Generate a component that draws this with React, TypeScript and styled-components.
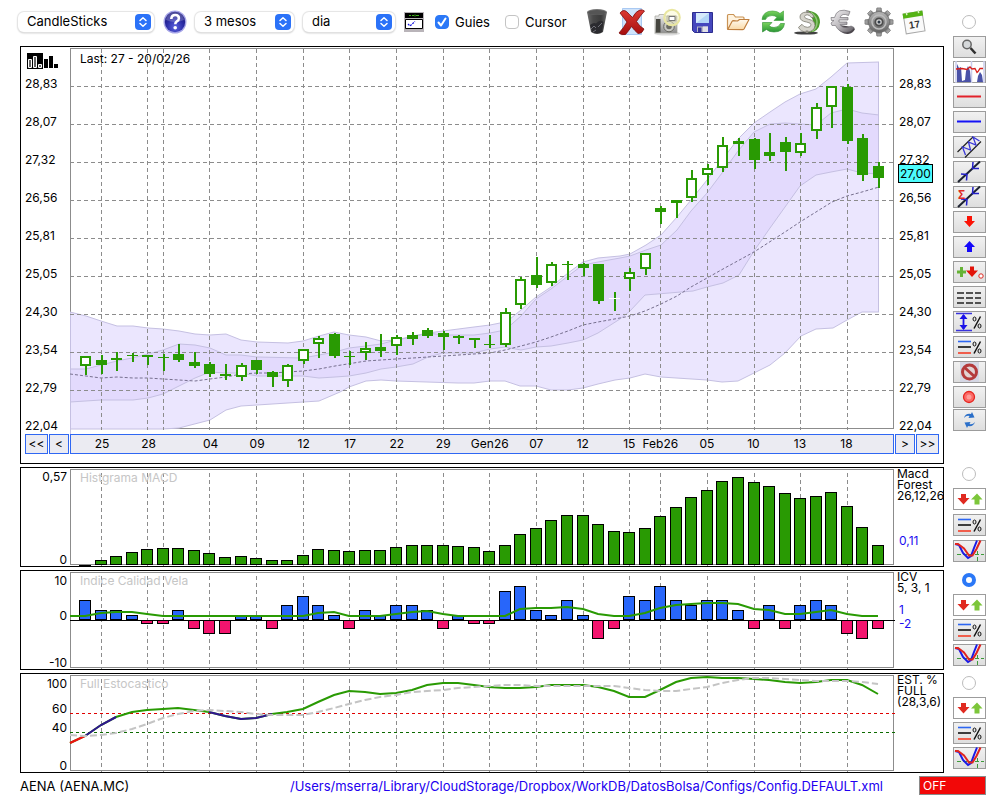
import React from "react";
import styled, { createGlobalStyle } from "styled-components";

const GlobalStyle = createGlobalStyle`
  * { box-sizing: border-box; }
  body {
    margin: 0;
    background: #fff;
    color: #000;
    font-family: Inter, "Liberation Sans", sans-serif;
    font-size: 12px;
  }
  button, select, input { font: inherit; color: inherit; }
`;

const GREEN = "#299a03";
const GRID = "#8c8c8c";

/* ---------- page ---------- */

const Page = styled.div`
  min-width: 960px;
`;

const Row = styled.div`
  display: grid;
  grid-template-columns: minmax(0, 1fr) 56px;
  margin-bottom: 3px;
`;

const HeaderRow = styled(Row)`
  height: 36px;
  padding-top: 7px;
  align-items: center;
  margin-bottom: 0;
`;

const Toolbar = styled.header`
  display: flex;
  align-items: center;
  gap: 9px;
  padding: 0 16px 0 18px;
`;

const SelectBox = styled.span<{ $w: number }>`
  position: relative;
  display: block;
  flex: none;
  width: ${(p) => p.$w}px;
  height: 20px;
`;

const Select = styled.select`
  appearance: none;
  width: 100%;
  height: 20px;
  padding: 0 22px 2px 9px;
  border: 0;
  border-radius: 6px;
  background: #fff;
  box-shadow: 0 0 1px 1px #e4e4e4, 0 1px 2px #b4b4b4;
  font-size: 13px;
  line-height: 18px;
`;

const Chip = styled.svg`
  position: absolute;
  top: 2px;
  right: 3px;
  width: 16px;
  height: 16px;
  pointer-events: none;
`;

const IconButton = styled.button<{ $w: number }>`
  display: flex;
  align-items: center;
  justify-content: center;
  flex: none;
  width: ${(p) => p.$w}px;
  height: 28px;
  padding: 0;
  border: 0;
  background: none;
  svg { display: block; flex: none; }
`;

const Check = styled.label`
  display: flex;
  align-items: center;
  flex: none;
  gap: 6px;
  margin-left: 2px;
  padding-top: 1px;
  font-size: 13px;
  line-height: 16px;
  & + & { margin-left: 6px; }
`;

const CheckInput = styled.input`
  appearance: none;
  width: 14px;
  height: 14px;
  margin: 0;
  border: 1px solid #c4c4c4;
  border-radius: 4px;
  background: #fff;
  &:checked {
    border-color: #2b78f7;
    background: #2b78f7;
  }
`;

const CheckBoxWrap = styled.span`
  position: relative;
  display: flex;
  svg {
    position: absolute;
    inset: 0;
    pointer-events: none;
  }
`;

const IconGroup = styled.div`
  display: flex;
  flex: 1;
  justify-content: space-between;
  margin-left: 7px;
`;

/* ---------- side tools ---------- */

const Side = styled.div<{ $top?: number }>`
  display: flex;
  flex-direction: column;
  align-items: flex-start;
  padding: ${(p) => p.$top ?? 0}px 0 0 9px;
`;

const Radio = styled.input`
  appearance: none;
  display: block;
  width: 14px;
  height: 14px;
  margin: 0 0 0 9px;
  border: 1px solid #bcbcbc;
  border-radius: 50%;
  background: #fff;
  &:checked { border: 4px solid #2b78f7; }
`;

const Tools = styled.div<{ $gap: number; $top: number }>`
  display: flex;
  flex-direction: column;
  gap: ${(p) => p.$gap}px;
  margin-top: ${(p) => p.$top}px;
`;

const Tool = styled.button<{ $plain?: boolean }>`
  display: block;
  width: 33px;
  height: 22px;
  padding: 0;
  border: 1px solid #9c9c9c;
  background: ${(p) => (p.$plain ? "#fff" : "linear-gradient(#f1f1f1, #dedede)")};
  svg { display: block; margin: -1px; }
  text { font-family: "Liberation Sans", sans-serif; }
`;

/* ---------- panels ---------- */

const Panel = styled.section<{ $top?: number }>`
  display: grid;
  grid-template-columns: 49px minmax(0, 1fr) 49px;
  align-content: start;
  margin: ${(p) => p.$top ?? 0}px 0 0 20px;
  border: 1px solid #000;
  overflow: hidden;
`;

const Plot = styled.div`
  position: relative;
`;

const Chart = styled.svg<{ $h: number }>`
  display: block;
  width: 100%;
  height: ${(p) => p.$h}px;
  overflow: visible;
  path, polyline, polygon, line { vector-effect: non-scaling-stroke; }
`;

const Caption = styled.span<{ $muted?: boolean }>`
  position: absolute;
  top: ${(p) => (p.$muted ? 2 : 4)}px;
  left: 10px;
  line-height: 16px;
  color: ${(p) => (p.$muted ? "#c6c6c6" : "#000")};
`;

const PriceScale = styled.div<{ $logo?: boolean }>`
  position: relative;
  display: flex;
  flex-direction: column;
  gap: 22px;
  padding: ${(p) => (p.$logo ? "0 0 0 4px" : "29px 0 0 5px")};
  line-height: 16px;
  svg { display: block; margin: 6px 0 -15px 2px; }
`;

const PriceTag = styled.span`
  position: absolute;
  top: 117px;
  left: 4px;
  padding: 0 1px;
  border: 1px solid #000;
  background: #4dfcfc;
  line-height: 17px;
`;

const NavCell = styled.div<{ $end?: boolean }>`
  display: flex;
  gap: 1px;
  justify-content: flex-end;
  padding: ${(p) => (p.$end ? "0 4px 0 1px" : "0 1px 0 4px")};
`;

const NavButton = styled.button<{ $w: number }>`
  width: ${(p) => p.$w}px;
  height: 20px;
  padding: 0;
  border: 1px solid #2f67f3;
  background: #ebebf2;
  line-height: 18px;
`;

const TimeAxis = styled.div`
  display: grid;
  grid-template-columns: repeat(53, minmax(0, 1fr));
  height: 20px;
  margin-bottom: 9px;
  border: 1px solid #2f67f3;
  background: #ebebf2;
  line-height: 18px;
`;

const TimeLabel = styled.span<{ $i: number }>`
  grid-column: ${(p) => p.$i + 1} / span 2;
  grid-row: 1;
  justify-self: center;
  white-space: nowrap;
`;

const TickColumn = styled.div<{ $top: number }>`
  display: flex;
  flex-direction: column;
  align-items: flex-end;
  padding: ${(p) => p.$top}px 3px 0 0;
  line-height: 12px;
`;

const Tick = styled.span<{ $gap: number }>`
  margin-top: ${(p) => p.$gap}px;
`;

const Legend = styled.div`
  padding-left: 3px;
  line-height: 11px;
  white-space: nowrap;
`;

const LegendLine = styled.div``;

const Values = styled.div<{ $top: number }>`
  margin-top: ${(p) => p.$top}px;
  padding-left: 2px;
  color: #1c0ff0;
  line-height: 14px;
`;

/* ---------- footer ---------- */

const Footer = styled.footer`
  display: flex;
  align-items: center;
  padding: 0 14px 0 20px;
  font-size: 13px;
  line-height: 18px;
`;

const ConfigLink = styled.a`
  margin: 0 36px 0 auto;
  color: #2200f0;
  text-decoration: none;
`;

const OffButton = styled.button`
  width: 67px;
  height: 19px;
  padding: 0 3px;
  border: 1px solid #8a8a8a;
  background: #f20808;
  color: #fff;
  font-size: 12px;
  text-align: left;
  line-height: 17px;
`;

/* ---------- data ---------- */

const LEFT = 70;
const STEP = 824 / 53;
const xAt = (i: number) => LEFT + Math.floor(STEP * (i + 1));

const guides = [1, 4, 5, 8, 11, 14, 17, 20, 23, 26, 29, 32, 35, 37, 40, 43, 46, 49];
const dates: [number, string][] = [
  [1, "25"], [4, "28"], [8, "04"], [11, "09"], [14, "12"], [17, "17"], [20, "22"], [23, "29"],
  [26, "Gen26"], [29, "07"], [32, "12"], [35, "15"], [37, "Feb26"], [40, "05"], [43, "10"], [46, "13"], [49, "18"],
];
const prices = ["28,83", "28,07", "27,32", "26,56", "25,81", "25,05", "24,30", "23,54", "22,79", "22,04"];

/* high, body top, body bottom, low, kind: 0 filled, 1 hollow, 2 white dash */
const candles: [number, number, number, number, number][] = [
  [356, 356, 366, 375, 1], [355, 360, 365, 374, 0], [352, 358, 360, 371, 0], [353, 355, 356, 362, 0],
  [355, 355, 357, 365, 0], [354, 357, 358, 371, 0], [344, 354, 360, 362, 0], [352, 362, 366, 368, 0],
  [362, 364, 374, 377, 0], [364, 374, 376, 380, 0], [363, 365, 377, 381, 1], [360, 360, 370, 374, 0],
  [371, 372, 377, 387, 0], [364, 365, 381, 387, 1], [349, 349, 361, 364, 1], [336, 338, 344, 358, 1],
  [333, 334, 356, 358, 0], [351, 356, 357, 365, 0], [342, 348, 353, 360, 1], [334, 347, 351, 357, 0],
  [335, 337, 346, 355, 1], [332, 335, 339, 345, 0], [328, 330, 336, 338, 0], [331, 333, 337, 350, 0],
  [335, 336, 338, 344, 0], [338, 338, 340, 348, 0], [335, 344, 345, 348, 0], [308, 312, 345, 347, 1],
  [277, 279, 305, 309, 1], [257, 275, 285, 288, 0], [262, 264, 283, 286, 1], [261, 264, 265, 280, 0],
  [263, 264, 268, 276, 0], [264, 264, 301, 304, 0], [292, 298, 299, 311, 2], [268, 272, 279, 291, 1],
  [253, 253, 269, 275, 1], [206, 208, 212, 224, 0], [200, 200, 203, 218, 0], [170, 178, 198, 202, 1],
  [164, 168, 175, 185, 1], [137, 145, 168, 172, 1], [138, 141, 144, 156, 0], [138, 139, 160, 169, 0],
  [133, 152, 156, 161, 0], [137, 142, 152, 171, 0], [133, 143, 153, 156, 1], [103, 107, 131, 139, 1],
  [86, 86, 107, 128, 1], [84, 87, 141, 144, 0], [134, 138, 175, 181, 0], [162, 166, 178, 188, 0],
];

const outerUp = "70,312 86,316 101,321 117,326 133,326 148,328 163,329 179,331 195,334 210,335 226,334 241,340 257,342 288,343 303,341 319,336 334,332 349,335 366,337 381,341 396,340 413,336 428,333 443,331 474,327 490,325 500,323 510,319 521,310 536,297 551,287 568,273 583,262 598,258 620,256 630,254 646,245 661,235 677,217 691,200 707,180 722,160 738,139 754,123 770,112 785,102 800,94 816,89 831,77 847,63 879,62";
const outerLow = "879,312 862,312 847,320 833,328 816,329 801,336 785,353 770,365 754,373 738,381 722,382 707,380 661,377 645,374 630,378 615,380 598,384 583,388 568,390 551,390 536,386 520,386 505,381 490,381 474,383 458,383 427,382 396,381 381,380 366,381 349,387 340,392 319,401 303,402 257,405 241,406 226,410 210,420 179,428 163,429 70,429";
const innerUp = "70,369 86,369 101,365 117,361 132,358 148,354 163,350 179,344 195,345 210,348 226,355 241,355 257,357 303,358 319,355 335,352 349,348 366,346 381,344 396,340 413,337 428,333 443,335 474,335 490,333 505,330 513,323 521,316 536,299 551,289 568,276 583,265 598,262 620,258 630,256 646,250 661,245 677,230 691,211 707,193 722,173 738,151 754,132 770,124 785,123 800,124 816,125 831,113 847,109 862,113 879,115";
const innerLow = "879,174 862,173 847,169 831,172 816,175 800,186 785,207 770,228 754,251 739,275 723,283 707,287 693,291 645,295 630,311 620,319 598,333 583,340 568,343 551,346 536,347 521,350 505,347 490,349 474,353 443,353 428,357 413,364 396,367 381,369 366,373 349,376 335,377 319,378 303,376 257,376 241,373 226,373 210,372 195,378 179,386 163,394 148,398 133,400 101,400 70,402";
const middle = "70,374 86,376 101,378 117,377 133,378 148,378 163,379 195,381 210,379 226,377 241,374 257,373 272,373 303,371 319,369 335,366 366,361 396,359 413,358 428,357 474,354 490,353 505,350 521,346 536,342 551,337 568,331 583,325 598,322 620,318 630,316 645,311 661,304 677,296 691,287 707,278 723,269 754,252 785,232 800,222 816,212 832,202 847,196 862,192 879,187";

const macdTops = [
  565, 560, 556, 552, 549, 548, 548, 550, 553, 557, 556, 558, 560, 560, 555, 549, 550, 551, 550, 550, 547, 545, 545, 545, 546, 547,
  551, 545, 534, 528, 520, 515, 515, 524, 531, 532, 528, 516, 507, 497, 490, 481, 477, 482, 486, 493, 498, 496, 492, 506, 527, 545,
];
const icvEnds = [
  600, 610, 610, 615, 624, 624, 610, 629, 634, 634, 615, 615, 629, 605, 596, 605, 615, 629, 610, 615, 605, 605, 610, 629, 615, 624,
  624, 591, 586, 610, 615, 600, 615, 639, 629, 596, 600, 586, 600, 605, 600, 600, 610, 629, 605, 629, 605, 600, 605, 634, 639, 629,
];
const icvLine = [
  616, 616, 613, 612, 612, 614, 616, 616, 616, 616, 616, 616, 616, 616, 616, 616, 613, 612, 616, 616, 616, 614, 612, 611, 614, 616, 616,
  616, 616, 609, 608, 608, 607, 609, 614, 616, 616, 613, 608, 605, 604, 603, 603, 604, 609, 610, 614, 614, 612, 610, 614, 616, 616,
];
const stoch = [
  743, 736, 725, 717, 712, 710, 709, 708, 710, 712, 716, 719, 718, 714, 712, 709, 702, 695, 691, 692, 694, 693, 690, 685, 683, 683, 685,
  687, 688, 688, 687, 685, 685, 685, 687, 691, 697, 697, 690, 682, 678, 677, 678, 678, 679, 680, 682, 683, 682, 680, 680, 685, 694,
];
const stochAvg = [
  735, 736, 735, 733, 729, 724, 718, 714, 711, 710, 711, 712, 714, 715, 715, 715, 712, 708, 704, 700, 697, 695, 692, 691, 690, 688, 687,
  686, 685, 685, 686, 686, 686, 686, 686, 686, 688, 690, 691, 691, 689, 687, 683, 680, 678, 678, 679, 680, 681, 681, 681, 682, 684,
];
/* series that start on the left edge of the plot, one step before the first candle */
const series = (ys: number[], from = 0, to = ys.length - 1) =>
  ys.slice(from, to + 1).map((y, k) => `${xAt(from + k - 1)},${y}`).join(" ");

/* ---------- charts ---------- */

const Guides = ({ top, bottom }: { top: number; bottom: number }) => (
  <g stroke={GRID} strokeDasharray="4 3" shapeRendering="crispEdges">
    {guides.map((i) => (
      <line key={i} x1={xAt(i) + 0.5} x2={xAt(i) + 0.5} y1={top} y2={bottom} />
    ))}
  </g>
);

const Frame = ({ top, bottom }: { top: number; bottom: number }) => (
  <path
    d={`M70.5 ${bottom + 0.5}V${top + 0.5}H893.5V${bottom + 0.5}Z`}
    fill="none"
    stroke={GRID}
    shapeRendering="crispEdges"
  />
);

const PriceChart = () => (
  <Chart $h={387} viewBox="70 47 824 387" preserveAspectRatio="none" role="img" aria-label="AENA candlesticks">
    <Frame top={48} bottom={428} />
    <polygon points={`${outerUp} ${outerLow}`} fill="#ebe6fe" />
    <polygon points={`${innerUp} ${innerLow}`} fill="#e3dafd" />
    <g fill="none" stroke="#c5c0e2">
      <polyline points={outerUp} />
      <polyline points={outerLow} />
      <polyline points={innerUp} />
      <polyline points={innerLow} />
      <path d="M878.5 62V312M70.5 312V434" />
    </g>
    <polyline points={middle} fill="none" stroke="#77708f" strokeDasharray="3 2" />
    <Guides top={49} bottom={430} />
    <g stroke={GRID} strokeDasharray="4 3" shapeRendering="crispEdges">
      {prices.slice(0, 9).map((p, k) => (
        <line key={p} x1={70} x2={896} y1={86.5 + 38 * k} y2={86.5 + 38 * k} />
      ))}
    </g>
    <g shapeRendering="crispEdges">
      {candles.map(([high, top, bottom, low, kind], i) => (
        <g key={i} fill={GREEN}>
          <rect x={xAt(i)} y={high} width={2} height={low - high} />
          <rect x={xAt(i) - 5} y={top} width={11} height={bottom - top} fill={kind === 2 ? "#fff" : GREEN} />
          {kind === 1 && <rect x={xAt(i) - 3} y={top + 2} width={7} height={bottom - top - 4} fill="#fff" />}
        </g>
      ))}
    </g>
  </Chart>
);

const MacdChart = () => (
  <Chart $h={98} viewBox="70 468 824 98" preserveAspectRatio="none" role="img" aria-label="MACD histogram">
    <Frame top={469} bottom={564} />
    <Guides top={473} bottom={566} />
    <g fill={GREEN} stroke="#000" shapeRendering="crispEdges">
      {macdTops.map((y, i) =>
        i === 0 ? (
          <line key={i} x1={xAt(i) - 6} x2={xAt(i) + 6} y1={565.5} y2={565.5} />
        ) : (
          <rect key={i} x={xAt(i) - 5.5} y={y + 0.5} width={11} height={564 - y} />
        ),
      )}
    </g>
  </Chart>
);

const IcvChart = () => (
  <Chart $h={98} viewBox="70 571 824 98" preserveAspectRatio="none" role="img" aria-label="Candle quality index">
    <Frame top={572} bottom={667} />
    <Guides top={576} bottom={669} />
    <g stroke="#000" shapeRendering="crispEdges">
      {icvEnds.map((y, i) =>
        y < 620 ? (
          <rect key={i} x={xAt(i) - 5.5} y={y + 0.5} width={11} height={619 - y} fill="#2866fa" />
        ) : (
          <rect key={i} x={xAt(i) - 5.5} y={620.5} width={11} height={y - 621} fill="#f2146e" />
        ),
      )}
      <line x1={70} x2={895} y1={620.5} y2={620.5} />
    </g>
    <polyline points={series(icvLine)} fill="none" stroke={GREEN} strokeWidth={2} />
  </Chart>
);

const StochChart = () => (
  <Chart $h={98} viewBox="70 674 824 98" preserveAspectRatio="none" role="img" aria-label="Full stochastic">
    <Frame top={675} bottom={770} />
    <Guides top={679} bottom={772} />
    <g strokeDasharray="3 3" shapeRendering="crispEdges">
      <line x1={70} x2={895} y1={713.5} y2={713.5} stroke="#e00000" />
      <line x1={70} x2={895} y1={732.5} y2={732.5} stroke="#0c6b00" />
    </g>
    <g fill="none" strokeWidth={2}>
      <polyline points={series(stoch)} stroke={GREEN} />
      <polyline points={series(stoch, 0, 1)} stroke="#f01010" />
      <polyline points={series(stoch, 1, 3)} stroke="#2f1590" />
      <polyline points={series(stoch, 9, 13)} stroke="#2f1590" />
      <polyline points={series(stochAvg)} stroke="#c4c4c4" strokeDasharray="7 3" />
    </g>
  </Chart>
);

/* ---------- toolbar icons ---------- */

const Updown = () => (
  <Chip viewBox="0 0 16 16">
    <rect width="16" height="16" rx="4" fill="#2b72f8" />
    <path d="M5 6.5 8 3.7l3 2.8M5 9.5l3 2.8 3-2.8" fill="none" stroke="#fff" strokeWidth="1.5" strokeLinecap="round" strokeLinejoin="round" />
  </Chip>
);

const HelpIcon = () => (
  <svg width="24" height="26" viewBox="0 0 24 26">
    <defs>
      <radialGradient id="help" cx=".5" cy=".75" r=".7">
        <stop offset="0" stopColor="#5a62e0" />
        <stop offset=".6" stopColor="#2a2ba4" />
        <stop offset="1" stopColor="#1c1a7c" />
      </radialGradient>
    </defs>
    <circle cx="12" cy="13" r="11.5" fill="#a7a6e8" />
    <circle cx="12" cy="13" r="10.2" fill="url(#help)" />
    <path d="M3 11a9 8 0 0 1 18 0q-9 4-18 0z" fill="#fff" opacity=".22" />
    <path d="M8.3 10q.2-4 3.9-4 3.7 0 3.7 3.2 0 2-2.1 3.2-1.5.9-1.5 2.8" fill="none" stroke="#fff" strokeWidth="2.6" />
    <circle cx="12.2" cy="18.7" r="1.8" fill="#fff" />
  </svg>
);

const PlanIcon = () => (
  <svg width="20" height="20" viewBox="0 0 20 20">
    <path fill="#b9b4b9" d="M0 0h20v20H0z" />
    <path fill="#000" d="M1 1h18v5H1z" />
    <path d="M5 3.5h2m1 0h2m1-1v2m1-1h3" stroke="#3fae1a" />
    <path fill="#fff" stroke="#000" d="M1.5 7.500h17v9h-17z" />
    <path d="m4 12 2 2 5-4.500" fill="none" stroke="#1515e0" strokeWidth="1.3" strokeDasharray="2 1" />
  </svg>
);

const TrashIcon = () => (
  <svg width="28" height="28" viewBox="0 0 28 28">
    <defs>
      <linearGradient id="can">
        <stop offset="0" stopColor="#6e6e6e" />
        <stop offset=".3" stopColor="#4a4a4a" />
        <stop offset=".7" stopColor="#3b3b3b" />
        <stop offset="1" stopColor="#6b6b6b" />
      </linearGradient>
    </defs>
    <path d="M4 4 8 24q6 4 12 0l4-20z" fill="url(#can)" />
    <ellipse cx="14" cy="4" rx="10" ry="3" fill="#777" />
    <ellipse cx="14" cy="4.500" rx="9" ry="2.500" fill="#555" />
    <path d="M7 17q4-3 6-1.500Q17 11 20.500 14L19 24q-5 2.500-10 0z" fill="#2b2b2f" />
    <path d="m8 21 3-3 2 2M15 19l4-4M10 24l3-2" stroke="#6e6e75" fill="none" />
  </svg>
);

const DeleteIcon = () => (
  <svg width="28" height="28" viewBox="0 0 28 28">
    <defs>
      <linearGradient id="cross" x2="0" y2="1">
        <stop offset="0" stopColor="#dd3a34" />
        <stop offset="1" stopColor="#a50d0d" />
      </linearGradient>
    </defs>
    <path d="M4.500.500h19v26h-19z" fill="#cfe3fb" stroke="#a9c9f2" />
    <path d="M2 5q3-4 6.500-1.500Q12 7 14.500 9.500 18 3 22 2q3-.5 4.500 1Q22 8 18.500 13.500q3 5 7.500 7.500-2 5-6 4.500-3.500-3-6.500-7-3 4.500-6 8-4.500 1-6.500-1.500 4.500-5 8-11Q5 9 2 5z" fill="url(#cross)" stroke="#7c0a0a" strokeWidth=".8" />
  </svg>
);

const CameraIcon = () => (
  <svg width="28" height="28" viewBox="0 0 28 28">
    <defs>
      <linearGradient id="cam" x2="0" y2="1">
        <stop offset="0" stopColor="#efefef" />
        <stop offset="1" stopColor="#8d8d8d" />
      </linearGradient>
    </defs>
    <ellipse cx="14" cy="25.500" rx="13" ry="2" fill="#ddd" />
    <path d="M2 8h4V6.500h6V8h12v17H2z" fill="url(#cam)" stroke="#a2a29a" strokeWidth=".7" />
    <path d="M3 11h4.500v13.500H3z" fill="#45453f" />
    <path d="M14 8h9v5h-9z" fill="#d6d8c2" stroke="#888" />
    <circle cx="16" cy="18.500" r="5.300" fill="#c8c8c4" stroke="#66665f" />
    <circle cx="16" cy="18.500" r="2.800" fill="#6c6c64" />
    <circle cx="19" cy="9.500" r="7.800" fill="#fbf9c8" fillOpacity=".45" stroke="#e9e6a0" strokeWidth="2" />
    <path d="M16 8.500h6v4h-6z" fill="#fff" stroke="#777" />
  </svg>
);

const SaveIcon = () => (
  <svg width="28" height="28" viewBox="0 0 28 28">
    <path d="M4.500 4.500h20v20h-18l-2-2z" fill="#4547bd" stroke="#2c2d8e" />
    <path d="M8 5h13v10H8z" fill="#d6eafb" />
    <path d="M8 15 21 5v10z" fill="#b3d6f6" />
    <path d="M9 18.500h11V24H9z" fill="#b9b9c4" />
    <path d="M10 19.500h3.500V24H10z" fill="#33349a" />
    <path d="M15 18.500h5V24h-5z" fill="#e1e1e8" />
  </svg>
);

const FolderIcon = () => (
  <svg width="28" height="28" viewBox="0 0 28 28">
    <defs>
      <linearGradient id="fold" x2="0" y2="1">
        <stop offset="0" stopColor="#fffaf0" />
        <stop offset="1" stopColor="#fad9a6" />
      </linearGradient>
    </defs>
    <path d="M3.500 21V7.500q0-1 1-1h5l2 2.500h7.500q1 0 1 1V13" fill="#fff3df" stroke="#c99355" strokeWidth="1.200" />
    <path d="M3.700 21.500 8 13.500q.5-.8 1.500-.8l4 .3 2-1.500h9.500L20 21q-.5.700-1.500.700z" fill="url(#fold)" stroke="#c08040" strokeWidth="1.200" strokeLinejoin="round" />
  </svg>
);

const SyncIcon = () => (
  <svg width="28" height="28" viewBox="0 0 28 28">
    <defs>
      <linearGradient id="sync" x2="0" y2="1">
        <stop offset="0" stopColor="#7ad35d" />
        <stop offset="1" stopColor="#2a9636" />
      </linearGradient>
    </defs>
    <path d="M3 11.500Q4 3 13.500 3q5 0 7.500 2.500L24.500 3v9.500H15l3-3.200q-2-1.800-5-1.800-5 0-6.500 4z" fill="url(#sync)" stroke="#3b9d35" strokeWidth=".6" />
    <path d="M25.500 15.500q-1 8.500-10.500 8.500-5 0-7.500-2.500L3.500 24v-9.500H13l-3 3.200q2 1.800 5 1.800 5 0 6.500-4z" fill="url(#sync)" stroke="#2c8b30" strokeWidth=".6" />
  </svg>
);

const DollarIcon = () => (
  <svg width="28" height="28" viewBox="0 0 28 28">
    <ellipse cx="12" cy="25" rx="12" ry="1.600" fill="#111" opacity=".8" />
    <path d="M13 2.500q13 1 13 12-1 9.500-11 10 6-6 4-12-2-6-6-10z" fill="#4e9a2d" />
    <path d="M17 4.500q6 4 6 10t-5 8.500" fill="none" stroke="#90c976" strokeWidth="1.500" />
    <path d="M20 9.500Q18.500 4 12.500 4 6 4.500 6 9q0 4 6.500 5 4.500.6 4.500 2.800 0 2.500-3.500 2.500-4 0-5.500-3l-3.500 3Q6.500 24 13 24q7.500-.5 8-6.500 0-5-6.500-6.200-4-.8-4-2.600.2-1.900 2.700-1.900 2.500 0 4 2.700z" fill="#d5d3cb" stroke="#7c7b70" strokeWidth=".8" />
    <path d="M13.500 2v3M13 22.500V25" stroke="#8a8980" strokeWidth="2.500" />
  </svg>
);

const EuroIcon = () => (
  <svg width="28" height="28" viewBox="0 0 28 28">
    <defs>
      <linearGradient id="euro" x2="1" y2="1">
        <stop offset="0" stopColor="#f6f4f6" />
        <stop offset=".55" stopColor="#b9b6ba" />
        <stop offset="1" stopColor="#5b575d" />
      </linearGradient>
    </defs>
    <path d="M8 19q4 7.500 11 7 5-.5 7-5l-2-2-14-2z" fill="#4b464c" />
    <path d="M21 3.500Q8-1 5.500 9.500H2l.5 3h2.500L2 15l1 2.500h3.500q3.500 7.500 11 6.500 5-.5 7.500-4.500L22 18q-3 2.500-6.500 1.500-3-.5-4.500-3h7V14h-8v-2h9V9.500h-8q2-5 8.500-2z" fill="url(#euro)" stroke="#77747a" strokeWidth=".7" />
  </svg>
);

const GearIcon = () => (
  <svg width="30" height="30" viewBox="0 0 30 30">
    <defs>
      <linearGradient id="gear" x2="0" y2="1">
        <stop offset="0" stopColor="#b7b7b7" />
        <stop offset="1" stopColor="#646464" />
      </linearGradient>
    </defs>
    <g fill="url(#gear)" stroke="#6d6d6d" strokeWidth=".8">
      {[0, 45, 90, 135, 180, 225, 270, 315].map((a) => (
        <path key={a} d="M12.300 6 12.900 1h4.200l.6 5z" transform={`rotate(${a} 15 15)`} />
      ))}
      <circle cx="15" cy="15" r="10.500" />
    </g>
    <circle cx="15" cy="15" r="7" fill="none" stroke="#bdbdbd" strokeWidth="1.500" />
    <circle cx="15" cy="15" r="3.700" fill="#d2d2d2" stroke="#4c4c4c" strokeWidth="1.800" />
    <circle cx="15" cy="15" r="1.500" fill="#2f3a46" />
  </svg>
);

const CalendarIcon = () => (
  <svg width="28" height="28" viewBox="0 0 28 28">
    <g transform="rotate(-9 14 14)">
      <path d="M4.500 4.500h19v20h-19z" fill="#fafafa" stroke="#a8a8a8" />
      <path d="M4 4h20v5H4z" fill="#54b314" />
      <path d="M8 3v3M20 3v3" stroke="#d9f2c4" strokeWidth="1.500" />
      <text x="14" y="20" textAnchor="middle" fontSize="10" fontWeight="700" fill="#333" fontFamily="Liberation Sans, sans-serif">17</text>
    </g>
  </svg>
);

/* ---------- side tool icons ---------- */

const Art = ({ children }: { children: React.ReactNode }) => (
  <svg width="33" height="22" viewBox="0 0 33 22">{children}</svg>
);

const Percent = () => (
  <g fill="none" stroke="#111">
    <path d="m21 17.500 6.500-12" strokeWidth="1.500" />
    <ellipse cx="21.500" cy="8" rx="1.500" ry="2" />
    <ellipse cx="26.500" cy="15" rx="1.500" ry="2" />
  </g>
);

const SearchArt = () => (
  <Art>
    <path d="m17.500 12 5 5.500" stroke="#2f2f2f" strokeWidth="2.500" />
    <circle cx="14" cy="8.500" r="4.200" fill="#d5d8da" stroke="#666" strokeWidth="1.500" />
  </Art>
);
const VolumeArt = () => (
  <Art>
    <path d="M3 0v22M18.500 0v22M31 0v22" stroke="#c9cbe9" strokeWidth="1.500" />
    <path d="M4 21V3l2 4 2-1 1 14 3-1 1-9 2-5 2 5 1 11zM24 21l1-6 2-4 2 3 1 7z" fill="#4a52a8" />
    <path d="m3 8 6-.5 5 1L17 6l2 2 3-.5 2 4 1-1 2-3h3" fill="none" stroke="#d8201c" strokeWidth="1.300" />
  </Art>
);
const LineArt = ({ color }: { color: string }) => (
  <Art>
    <path d="M4 10.500h24" stroke={color} strokeWidth="2" />
  </Art>
);
const ChannelArt = () => (
  <Art>
    <path d="M4.500 16 20 1M12 21.500 28 5.500" stroke="#222" strokeWidth="1.200" />
    <path d="m12.500 19-3-8 8 3-2-8 7.500 3-3-8 6.500 4" fill="none" stroke="#3a38d8" strokeWidth="1.300" />
  </Art>
);
const CrossArt = ({ sum }: { sum?: boolean }) => (
  <Art>
    <path d="M5 21 27 .500" stroke="#1c2230" strokeWidth="2" />
    <path d="m8 13 6 .5-.5 6M20 1l-.5 6.500H26" fill="none" stroke="#2320c8" strokeWidth="1.500" />
    {sum && <text x="5" y="13" fontSize="12" fontWeight="700" fill="#e02a22">Σ</text>}
  </Art>
);
const DownArt = () => (
  <Art>
    <path d="M14 5h5v5h3l-5.500 6L11 10h3z" fill="#fb1205" />
  </Art>
);
const UpArt = () => (
  <Art>
    <path d="M14 16h5v-5h3l-5.500-6L11 11h3z" fill="#1508fa" />
  </Art>
);
const SignalsArt = () => (
  <Art>
    <path d="M8.500 6v10M4 11h9" stroke="#66b336" strokeWidth="3" />
    <path d="M17 5.500h4v4h4l-6 6.500-6-6.500h4z" fill="#e2140a" />
    <circle cx="28" cy="15" r="2.200" fill="#fff" stroke="#e02a22" />
  </Art>
);
const DashesArt = () => (
  <Art>
    <path d="M4 7h24M4 12h24M4 17h24" stroke="#222" strokeWidth="1.500" strokeDasharray="7 2" />
  </Art>
);
const RangeArt = () => (
  <Art>
    <path d="M3 2.500h16M3 19.500h16" stroke="#3833dc" strokeWidth="1.300" />
    <path d="M10.500 4v14" stroke="#1b12e8" strokeWidth="1.800" />
    <path d="m10.500 3 4 5h-8zM10.500 19l4-5h-8z" fill="#1b12e8" />
    <Percent />
  </Art>
);
const LevelsArt = () => (
  <Art>
    <path d="M5 5.500h13" stroke="#2c66f2" strokeWidth="1.600" />
    <path d="M5 11h13" stroke="#111" strokeWidth="1.600" />
    <path d="M5 17h13" stroke="#f2503c" strokeWidth="1.800" />
    <Percent />
  </Art>
);
const ForbidArt = () => (
  <Art>
    <path d="M7 1h19v20H7z" fill="#d5d7e4" />
    <circle cx="16.500" cy="11" r="7" fill="#e2d2d4" stroke="#b43a3c" strokeWidth="3" />
    <path d="m11.500 6.500 10 9" stroke="#b43a3c" strokeWidth="3" />
  </Art>
);
const RecordArt = () => (
  <Art>
    <circle cx="16" cy="11" r="5.500" fill="#fb6a66" stroke="#e52620" strokeWidth="1.300" />
    <circle cx="16" cy="11" r="2.500" fill="#ff9b96" />
  </Art>
);
const ReloadArt = () => (
  <Art>
    <path d="M11 9q1.500-5 7-4l1-2 2.500 5.500-6 .5 1-2q-3-1-5.500 2z" fill="#2b6fc9" />
    <path d="M22 13q-1.500 5-7 4l-1 2-2.500-5.500 6-.5-1 2q3 1 5.500-2z" fill="#2b6fc9" />
  </Art>
);
const PairArt = () => (
  <Art>
    <path d="M8 6h5v4h3.500l-6 6.500L4.500 10H8z" fill="#e02a20" />
    <path d="M21.500 16.500h5v-5h3L24 5.500l-6 6h3.500z" fill="#7cc63a" />
  </Art>
);
const CurvesArt = () => (
  <Art>
    <path d="M4 14.500h27M24.500 11v11" stroke="#3d9a3a" strokeDasharray="4 2" />
    <path d="m2 4 4 1 4 8 5 5 3-2 3-8 3-7.500" fill="none" stroke="#1a1ae6" strokeWidth="2" />
    <path d="M2 4h3l6 4.500 5 7h3.500l4-6.500 4-8.500" fill="none" stroke="#e02420" strokeWidth="2" />
  </Art>
);

const mainTools: [string, React.ReactNode][] = [
  ["Zoom", <SearchArt />], ["Volume", <VolumeArt />], ["Red line", <LineArt color="#e2222a" />], ["Blue line", <LineArt color="#1512f5" />],
  ["Channel", <ChannelArt />], ["Trend", <CrossArt />], ["Trend sum", <CrossArt sum />], ["Sell", <DownArt />], ["Buy", <UpArt />],
  ["Signals", <SignalsArt />], ["Levels", <DashesArt />], ["Range", <RangeArt />], ["Percent levels", <LevelsArt />],
  ["Forbid", <ForbidArt />], ["Record", <RecordArt />],
];

const IndicatorTools = ({ name, top = 0, gap, checked }: { name: string; top?: number; gap: number; checked?: boolean }) => (
  <Side $top={top}>
    <Radio type="radio" name="panel" aria-label={name} defaultChecked={checked} />
    <Tools $gap={gap} $top={7}>
      <Tool type="button" $plain aria-label={`${name} order`}><PairArt /></Tool>
      <Tool type="button" aria-label={`${name} levels`}><LevelsArt /></Tool>
      <Tool type="button" aria-label={`${name} curves`}><CurvesArt /></Tool>
    </Tools>
  </Side>
);

const PickList = ({ label, width, options }: { label: string; width: number; options: string[] }) => (
  <SelectBox $w={width}>
    <Select aria-label={label}>
      {options.map((o) => (
        <option key={o}>{o}</option>
      ))}
    </Select>
    <Updown />
  </SelectBox>
);

const CheckField = ({ label, checked }: { label: string; checked?: boolean }) => (
  <Check>
    <CheckBoxWrap>
      <CheckInput type="checkbox" defaultChecked={checked} />
      {checked && (
        <svg width="14" height="14" viewBox="0 0 14 14">
          <path d="m3.500 7.500 2.500 3 4.500-7" fill="none" stroke="#fff" strokeWidth="2" strokeLinecap="round" strokeLinejoin="round" />
        </svg>
      )}
    </CheckBoxWrap>
    {label}
  </Check>
);

const LogoMark = () => (
  <svg width="32" height="16" viewBox="0 0 32 16">
    <path d="M0 0h16v16H0z" />
    <path d="M1.500 6.500h3v8h-3zM6.500 3.500h3v11h-3zM11.500 11.500h3v3h-3z" fill="#666" stroke="#fff" />
    <path d="M17 6h4v9h-4zM22 3h4v12h-4zM27 11h4v4h-4z" />
  </svg>
);

export default function App() {
  return (
    <Page>
      <GlobalStyle />
      <HeaderRow>
        <Toolbar>
          <PickList label="Chart type" width={136} options={["CandleSticks", "Line", "Bars"]} />
          <IconButton type="button" $w={23} aria-label="Help"><HelpIcon /></IconButton>
          <PickList label="Period" width={99} options={["3 mesos", "6 mesos", "1 any"]} />
          <PickList label="Interval" width={92} options={["dia", "setmana", "mes"]} />
          <IconButton type="button" $w={20} aria-label="Plan"><PlanIcon /></IconButton>
          <CheckField label="Guies" checked />
          <CheckField label="Cursor" />
          <IconGroup>
            <IconButton type="button" $w={28} aria-label="Trash"><TrashIcon /></IconButton>
            <IconButton type="button" $w={28} aria-label="Delete"><DeleteIcon /></IconButton>
            <IconButton type="button" $w={28} aria-label="Snapshot"><CameraIcon /></IconButton>
            <IconButton type="button" $w={28} aria-label="Save"><SaveIcon /></IconButton>
            <IconButton type="button" $w={28} aria-label="Open"><FolderIcon /></IconButton>
            <IconButton type="button" $w={28} aria-label="Refresh"><SyncIcon /></IconButton>
            <IconButton type="button" $w={28} aria-label="Dollar"><DollarIcon /></IconButton>
            <IconButton type="button" $w={28} aria-label="Euro"><EuroIcon /></IconButton>
            <IconButton type="button" $w={28} aria-label="Settings"><GearIcon /></IconButton>
            <IconButton type="button" $w={28} aria-label="Calendar"><CalendarIcon /></IconButton>
          </IconGroup>
        </Toolbar>
        <Side>
          <Radio type="radio" name="panel" aria-label="Price" />
        </Side>
      </HeaderRow>

      <Row>
        <Panel $top={10}>
          <PriceScale $logo>
            <LogoMark />
            {prices.map((p) => <span key={p}>{p}</span>)}
          </PriceScale>
          <Plot>
            <PriceChart />
            <Caption>Last: 27 - 20/02/26</Caption>
          </Plot>
          <PriceScale>
            {prices.map((p) => <span key={p}>{p}</span>)}
            <PriceTag>27,00</PriceTag>
          </PriceScale>
          <NavCell>
            <NavButton type="button" $w={23}>&lt;&lt;</NavButton>
            <NavButton type="button" $w={20}>&lt;</NavButton>
          </NavCell>
          <TimeAxis>
            {dates.map(([i, d]) => <TimeLabel key={i} $i={i}>{d}</TimeLabel>)}
          </TimeAxis>
          <NavCell $end>
            <NavButton type="button" $w={20}>&gt;</NavButton>
            <NavButton type="button" $w={23}>&gt;&gt;</NavButton>
          </NavCell>
        </Panel>
        <Side>
          <Tools $gap={3} $top={0}>
            {mainTools.map(([name, art]) => (
              <Tool key={name} type="button" $plain={name === "Volume"} aria-label={name}>{art}</Tool>
            ))}
          </Tools>
          <Tools $gap={3} $top={1}>
            <Tool type="button" aria-label="Reload"><ReloadArt /></Tool>
          </Tools>
        </Side>
      </Row>

      <Row>
        <Panel>
          <TickColumn $top={3}>
            <Tick $gap={0}>0,57</Tick>
            <Tick $gap={71}>0</Tick>
          </TickColumn>
          <Plot>
            <MacdChart />
            <Caption $muted>Histgrama MACD</Caption>
          </Plot>
          <Legend>
            <LegendLine>Macd</LegendLine>
            <LegendLine>Forest</LegendLine>
            <LegendLine>26,12,26</LegendLine>
            <Values $top={33}>0,11</Values>
          </Legend>
        </Panel>
        <IndicatorTools name="MACD" gap={4} />
      </Row>

      <Row>
        <Panel>
          <TickColumn $top={4}>
            <Tick $gap={0}>10</Tick>
            <Tick $gap={23}>0</Tick>
            <Tick $gap={35}>-10</Tick>
          </TickColumn>
          <Plot>
            <IcvChart />
            <Caption $muted>Indice Calidad Vela</Caption>
          </Plot>
          <Legend>
            <LegendLine>ICV</LegendLine>
            <LegendLine>5, 3, 1</LegendLine>
            <Values $top={10}>
              <LegendLine>1</LegendLine>
              <LegendLine>-2</LegendLine>
            </Values>
          </Legend>
        </Panel>
        <IndicatorTools name="ICV" top={3} gap={3} checked />
      </Row>

      <Row>
        <Panel>
          <TickColumn $top={4}>
            <Tick $gap={0}>100</Tick>
            <Tick $gap={13}>60</Tick>
            <Tick $gap={7}>40</Tick>
            <Tick $gap={26}>0</Tick>
          </TickColumn>
          <Plot>
            <StochChart />
            <Caption $muted>Full Estocastico</Caption>
          </Plot>
          <Legend>
            <LegendLine>EST. %</LegendLine>
            <LegendLine>FULL</LegendLine>
            <LegendLine>(28,3,6)</LegendLine>
          </Legend>
        </Panel>
        <IndicatorTools name="Stochastic" top={3} gap={3} />
      </Row>

      <Footer>
        <span>AENA (AENA.MC)</span>
        <ConfigLink href="#config">/Users/mserra/Library/CloudStorage/Dropbox/WorkDB/DatosBolsa/Configs/Config.DEFAULT.xml</ConfigLink>
        <OffButton type="button">OFF</OffButton>
      </Footer>
    </Page>
  );
}
